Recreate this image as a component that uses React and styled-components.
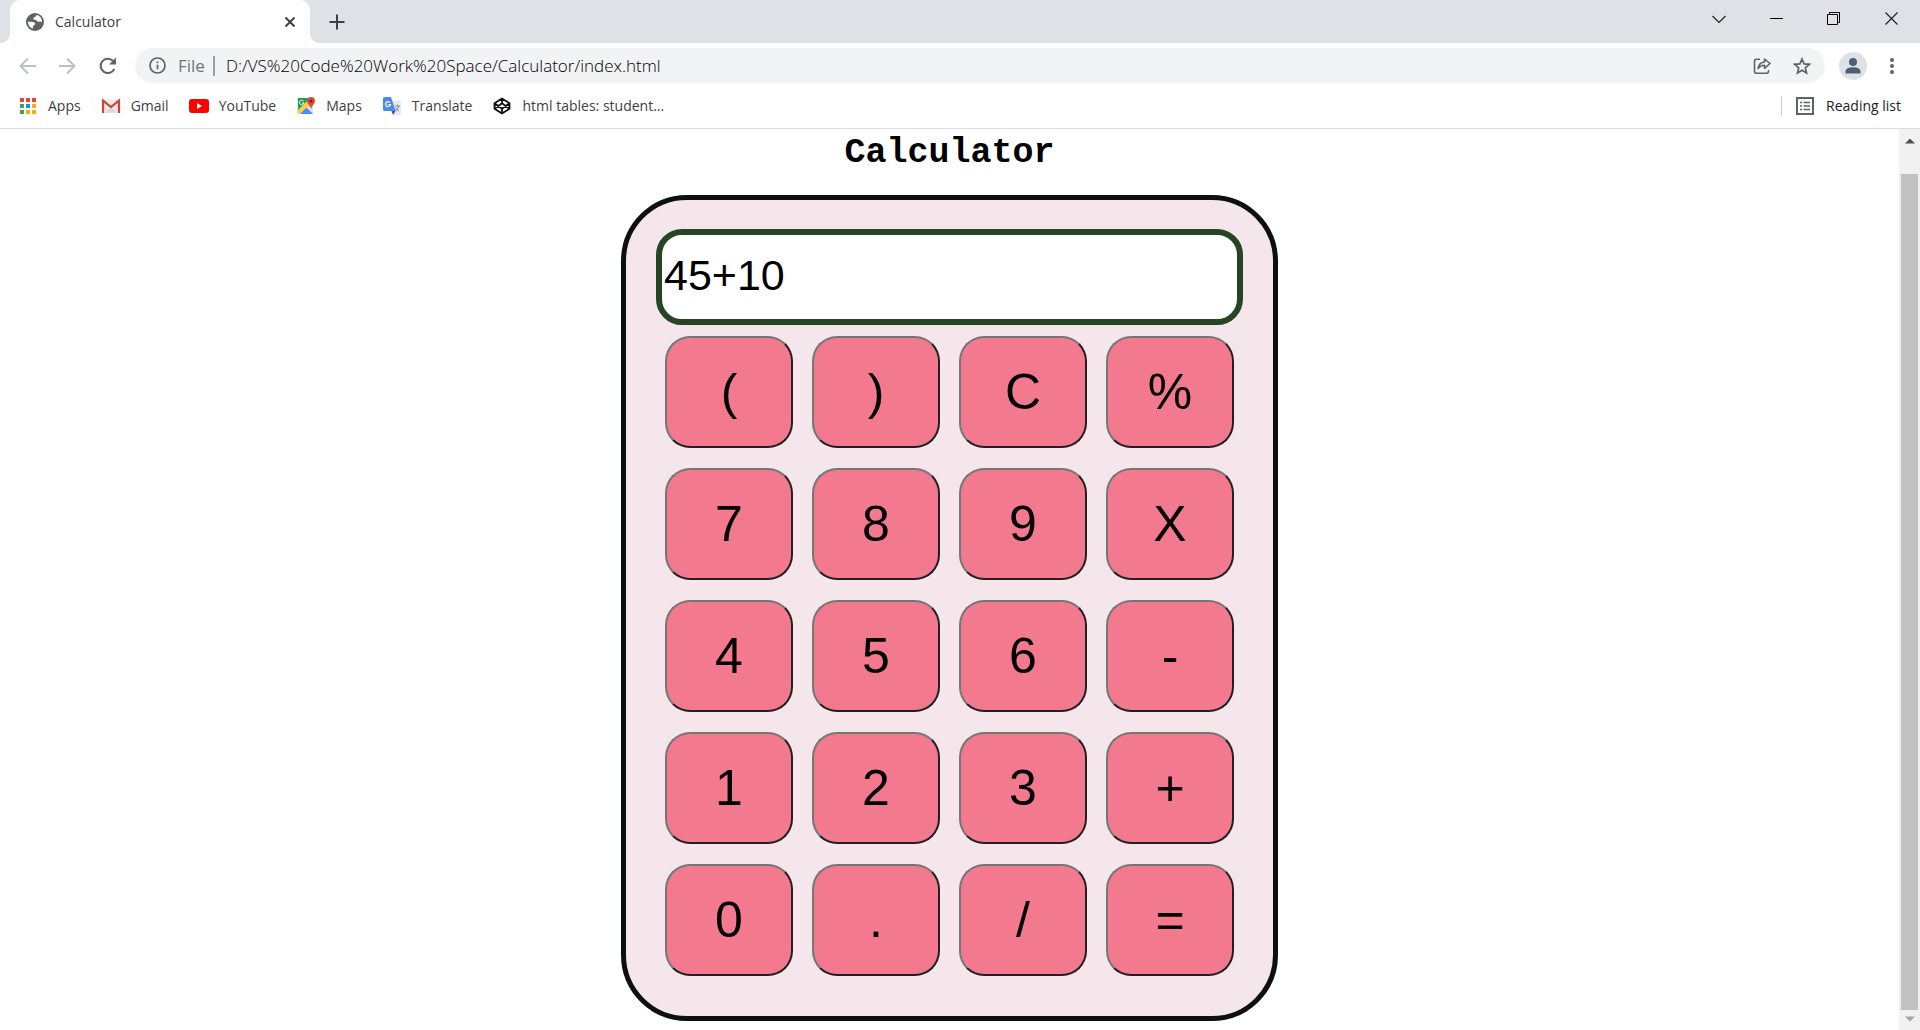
import React, { useState } from "react";
import styled, { createGlobalStyle } from "styled-components";

const GlobalStyle = createGlobalStyle`
  * { box-sizing: border-box; }
  body { margin: 0; background: #fff; }
  button { margin: 0; cursor: pointer; }
`;

const uiFont = `"Segoe UI", "Open Sans", "Noto Sans", sans-serif`;

const Window = styled.div`
  display: flex;
  flex-direction: column;
  height: 100vh;
  overflow: hidden;
  font-family: ${uiFont};
  color: #3c4043;
`;

const TabStrip = styled.header`
  display: flex;
  align-items: flex-end;
  height: 43px;
  padding-left: 10px;
  background: #dee1e6;
`;

const Tab = styled.div`
  position: relative;
  display: flex;
  align-items: center;
  gap: 11px;
  width: 300px;
  height: 43px;
  padding: 0 12px 0 16px;
  border-radius: 10px 10px 0 0;
  background: #fff;

  &::before,
  &::after {
    content: "";
    position: absolute;
    bottom: 0;
    width: 10px;
    height: 10px;
  }
  &::before {
    right: 100%;
    background: radial-gradient(circle at 0 0, transparent 10px, #fff 10px);
  }
  &::after {
    left: 100%;
    background: radial-gradient(circle at 100% 0, transparent 10px, #fff 10px);
  }
`;

const TabTitle = styled.span`
  flex: 1;
  font-size: 14px;
  line-height: 20px;
`;

const IconButton = styled.button`
  display: flex;
  align-items: center;
  justify-content: center;
  width: ${(p) => p.$width || 40}px;
  height: ${(p) => p.$height || 35}px;
  padding: 0;
  border: 0;
  border-radius: 50%;
  background: none;
  color: ${(p) => p.$color || "#5f6368"};
`;

const WindowControls = styled.div`
  display: flex;
  align-self: flex-start;
  margin-left: auto;
`;

const Toolbar = styled.nav`
  display: flex;
  align-items: center;
  height: 45px;
  padding: 0 10px 0 8px;
`;

const Omnibox = styled.form`
  display: flex;
  flex: 1;
  align-items: center;
  height: 35px;
  margin: 0 7px;
  padding: 0 3px 0 14px;
  border-radius: 18px;
  background: #f1f3f4;
  color: #5f6368;
`;

const Scheme = styled.label`
  margin-left: 12px;
  padding-right: 8px;
  border-right: 2px solid #9aa0a6;
  font-size: 17px;
  line-height: 20px;
  color: #70757a;
`;

const Address = styled.input`
  flex: 1;
  min-width: 0;
  height: 26px;
  padding: 0 0 0 11px;
  border: 0;
  outline: 0;
  background: none;
  font-family: ${uiFont};
  font-size: 17px;
  font-weight: 300;
  color: #000;
`;

const BookmarksBar = styled.nav`
  display: flex;
  align-items: center;
  gap: 20px;
  height: 41px;
  padding: 0 18px 4px;
  border-bottom: 1px solid #dadce0;
`;

const Bookmark = styled.a`
  display: flex;
  align-items: center;
  gap: 10px;
  font-size: 14px;
  line-height: 20px;
  color: #3c4043;
  text-decoration: none;
  white-space: nowrap;
`;

const ReadingList = styled.button`
  display: flex;
  align-items: center;
  gap: 12px;
  height: 20px;
  margin-left: auto;
  padding: 0 1px 0 14px;
  border: 0;
  border-left: 1px solid #c8cbd0;
  background: none;
  font-family: ${uiFont};
  font-size: 14px;
  line-height: 20px;
  color: #202124;

  svg { color: #5f6368; }
`;

const Viewport = styled.div`
  display: flex;
  flex: 1;
  min-height: 0;
`;

const Page = styled.main`
  display: flex;
  flex: 1;
  flex-direction: column;
  align-items: center;
  overflow: hidden;
  background: #fff;
`;

const Title = styled.h1`
  margin: 4px 0 22px;
  font-family: "Courier New", "Liberation Mono", monospace;
  font-size: 35px;
  line-height: 40px;
  color: #000;
`;

const CalculatorBody = styled.section`
  display: flex;
  flex-direction: column;
  gap: 11px;
  padding: 29px 30px 40px;
  border: 5px solid #0c110f;
  border-radius: 66px;
  background: #f4e6eb;
`;

const Display = styled.input`
  width: 100%;
  height: 96px;
  padding: 0 2px 4px;
  border: 6px solid #254525;
  border-radius: 26px;
  outline: 0;
  background: #fff;
  font-family: Arial, "Liberation Sans", sans-serif;
  font-size: 43px;
  color: #000;
`;

const Keypad = styled.div`
  display: grid;
  grid-template-columns: repeat(4, 128px);
  gap: 20px 19px;
  padding: 0 9px;
`;

const Key = styled.button`
  height: 112px;
  padding: 0;
  border: 2px solid;
  border-color: #767676 #212121 #212121 #767676;
  border-radius: 25px;
  background: #f3798f;
  font-family: Arial, "Liberation Sans", sans-serif;
  font-size: 50px;
  color: #000;
`;

const Scrollbar = styled.div`
  display: flex;
  flex-direction: column;
  width: 21px;
  padding: 0 2px;
  background: #f1f1f1;
`;

const ScrollArrow = styled.button`
  display: flex;
  align-items: center;
  justify-content: center;
  height: 20px;
  padding: ${(p) => (p.$up ? "4px 0 0" : "0 0 2px")};
  border: 0;
  background: none;
  color: ${(p) => (p.$up ? "#505050" : "#a3a3a3")};
`;

const Thumb = styled.div`
  flex: 1;
  margin-top: 25px;
  background: #c1c1c1;
`;

const Icon = ({ size = 20, box = "0 0 20 20", children, ...rest }) => (
  <svg width={size} height={size} viewBox={box} fill="none" stroke="currentColor" strokeWidth="2" aria-hidden="true" {...rest}>
    {children}
  </svg>
);

const GlobeIcon = () => (
  <Icon size={18} box="0 0 18 18" stroke="none" color="#5f6368">
    <circle cx="9" cy="9" r="9" fill="currentColor" />
    <path d="M10.5 1.8C10.7 3.6 9.4 3.7 8.3 4.2 7 4.8 7.2 6 7.8 6.4 9 7.2 9.7 6.4 10.4 7.3 11 8.3 11.4 8.8 13 8.6 14.4 8.4 15.2 9 16.1 9 16 5.2 13.8 2.8 10.5 1.8zM1.9 8.8C3.8 8.7 7 8.5 8.5 9.6 9.7 10.6 9.2 12 8 12.3 6.7 12.7 7 14.3 6.6 15.7 3.8 14.6 2 12.2 1.9 8.8z" fill="#fff" />
  </Icon>
);

const AppsIcon = () => (
  <Icon stroke="none">
    {["#ea4335", "#ea4335", "#ea4335", "#34a853", "#1a8cf0", "#fbab0a", "#34a853", "#fbab0a", "#fbab0a"].map((c, i) => (
      <rect key={i} x={2 + (i % 3) * 6} y={2 + Math.floor(i / 3) * 6} width="4" height="4" fill={c} />
    ))}
  </Icon>
);

const GmailIcon = () => (
  <Icon stroke="none">
    <path d="M1 4h18v13H1z" fill="#ebebeb" />
    <path d="M4 16.5 10 11l6 5.5z" fill="#d8d8d8" />
    <path d="M2 17V4.5L10 11l8-6.5V17" fill="none" stroke="#d93f35" strokeWidth="2.2" />
  </Icon>
);

const YouTubeIcon = () => (
  <Icon stroke="none">
    <rect x="0" y="3" width="20" height="14" rx="3" fill="#f00" />
    <path d="M8 7v6l5-3z" fill="#fff" />
  </Icon>
);

const MapsIcon = () => (
  <Icon stroke="none">
    <rect x="1" y="2" width="16" height="16" rx="1.5" fill="#e3e5e8" />
    <path d="M2.5 2H13v5L2 17V2z" fill="#1f9d57" />
    <path d="M1 15 13 3l3 4L4 18H2.5z" fill="#fdd044" />
    <path d="M4 18 10.5 11.5 17 18z" fill="#4b8df8" />
    <path d="M7.5 5.2A2.2 2.2 0 1 0 7.8 7H6" stroke="#fff" strokeWidth="1" fill="none" />
    <path d="M15 1a4 4 0 0 0-4 4c0 3.200 3.300 4 4 8.500.7-4.500 4-5.300 4-8.500a4 4 0 0 0-4-4z" fill="#dd4b3e" />
    <circle cx="15" cy="5" r="1.5" fill="#7b231e" />
  </Icon>
);

const TranslateIcon = () => (
  <Icon stroke="none">
    <path d="M8 5h9.500q1.500 0 1.500 1.500v11q0 1.500-1.500 1.500H11z" fill="#e6e8ea" />
    <path d="M13 10h5M15.500 8.500V10M17 10q-.5 3-4 5M13.500 11.500q1 2.500 3.500 3.500" stroke="#7b8a91" strokeWidth="1" />
    <path d="M2.500 1H9l4.500 14h-11Q1 15 1 13.500v-11Q1 1 2.500 1z" fill="#4a87ee" />
    <path d="M9.500 15h4L11 19z" fill="#2658c7" />
    <path d="M8 6.500A2.500 2.500 0 1 0 8.500 8.500H6.200" stroke="#fff" strokeWidth="1.2" fill="none" />
  </Icon>
);

const CodePenIcon = () => (
  <Icon color="#111" strokeWidth="1.8" strokeLinejoin="round">
    <path d="M10 2.500 17.500 7.300v5.400L10 17.500 2.500 12.700V7.300zM10 2.500v4.800M10 12.700v4.800M2.500 7.300 10 12.700l7.500-5.400M2.500 12.700 10 7.300l7.500 5.400" />
  </Icon>
);

const bookmarks = [
  ["Apps", AppsIcon],
  ["Gmail", GmailIcon],
  ["YouTube", YouTubeIcon],
  ["Maps", MapsIcon],
  ["Translate", TranslateIcon],
  ["html tables: student...", CodePenIcon],
];

const keys = ["(", ")", "C", "%", "7", "8", "9", "X", "4", "5", "6", "-", "1", "2", "3", "+", "0", ".", "/", "="];

function evaluate(expression) {
  try {
    return String(Function(`return (${expression.replace(/X/g, "*")})`)());
  } catch {
    return "Error";
  }
}

export default function App() {
  const [value, setValue] = useState("45+10");
  const [address, setAddress] = useState("D:/VS%20Code%20Work%20Space/Calculator/index.html");

  const press = (key) => {
    if (key === "C") setValue("");
    else if (key === "=") setValue(evaluate(value));
    else setValue(value + key);
  };

  return (
    <Window>
      <GlobalStyle />
      <TabStrip>
        <Tab>
          <GlobeIcon />
          <TabTitle>Calculator</TabTitle>
          <IconButton $width={16} $height={16} $color="#3c4043" aria-label="Close tab">
            <Icon size={12} box="0 0 12 12"><path d="M1.500 1.500l9 9M10.500 1.500l-9 9" /></Icon>
          </IconButton>
        </Tab>
        <IconButton $width={54} $height={43} $color="#3c4043" aria-label="New tab">
          <Icon size={16} box="0 0 16 16"><path d="M8 .5v15M.5 8h15" /></Icon>
        </IconButton>
        <WindowControls>
          <IconButton $width={58} $height={37} $color="#222" aria-label="Search tabs">
            <Icon size={14} box="0 0 14 14" strokeWidth="1.2"><path d="M.5 4 7 10.500 13.500 4" /></Icon>
          </IconButton>
          <IconButton $width={57} $height={37} $color="#000" aria-label="Minimize">
            <Icon size={13} box="0 0 13 13" strokeWidth="1"><path d="M0 6.500h13" /></Icon>
          </IconButton>
          <IconButton $width={57} $height={37} $color="#000" aria-label="Restore">
            <Icon size={13} box="0 0 13 13" strokeWidth="1"><path d="M.5 2.500h10v10H.5zM2.500 2.500v-2h10v10h-2" /></Icon>
          </IconButton>
          <IconButton $width={58} $height={37} $color="#222" aria-label="Close window">
            <Icon size={13} box="0 0 13 13" strokeWidth="1.2"><path d="M.5.5l12 12M12.500.5l-12 12" /></Icon>
          </IconButton>
        </WindowControls>
      </TabStrip>

      <Toolbar>
        <IconButton $color="#bdc1c6" aria-label="Back">
          <Icon><path d="M18 10H3M10 2.500 2.500 10l7.500 7.500" /></Icon>
        </IconButton>
        <IconButton $color="#bdc1c6" aria-label="Forward">
          <Icon><path d="M1 10h15M9 2.500l7.500 7.500-7.500 7.500" /></Icon>
        </IconButton>
        <IconButton aria-label="Reload">
          <Icon><path d="M16.300 13A7.200 7.200 0 1 1 15 4.900L16.500 6.500" /><path d="M18 1.500V8.500H11z" fill="currentColor" stroke="none" /></Icon>
        </IconButton>
        <Omnibox onSubmit={(e) => e.preventDefault()}>
          <Icon size={17}><circle cx="10" cy="10" r="8.8" /><path d="M10 9v5.500M10 5.200v2.200" /></Icon>
          <Scheme htmlFor="address">File</Scheme>
          <Address id="address" value={address} onChange={(e) => setAddress(e.target.value)} spellCheck={false} />
          <IconButton type="button" aria-label="Share">
            <Icon size={18} box="0 0 18 18" strokeWidth="1.6" strokeLinejoin="round">
              <path d="M7 2.200H3.500Q1.500 2.200 1.500 4.200v10q0 2 2 2h10q2 0 2-2V13" />
              <path d="M11.500 2v3Q6 5.500 5 11.500q2.500-3.200 6.500-3.200v3L17 6.500z" />
            </Icon>
          </IconButton>
          <IconButton type="button" aria-label="Bookmark this page">
            <Icon size={18} box="0 0 18 18" strokeWidth="1.7"><path d="M9 2l2.100 4.900 5.200.4-4 3.500 1.200 5.200L9 13.200 4.500 16l1.200-5.200-4-3.500 5.200-.4z" /></Icon>
          </IconButton>
        </Omnibox>
        <IconButton $width={42} aria-label="Profile">
          <Icon size={28} box="0 0 28 28" stroke="none">
            <circle cx="14" cy="14" r="14" fill="#dee1e6" />
            <circle cx="14" cy="10" r="4" fill="#4f5d73" />
            <path d="M6.500 21.500v-2c0-3 4-4.300 7.500-4.300s7.500 1.300 7.500 4.300v2z" fill="#4f5d73" />
          </Icon>
        </IconButton>
        <IconButton $width={36} aria-label="Menu">
          <Icon stroke="none" fill="currentColor"><circle cx="10" cy="4" r="2" /><circle cx="10" cy="10" r="2" /><circle cx="10" cy="16" r="2" /></Icon>
        </IconButton>
      </Toolbar>

      <BookmarksBar>
        {bookmarks.map(([label, Glyph]) => (
          <Bookmark key={label} href="#"><Glyph />{label}</Bookmark>
        ))}
        <ReadingList>
          <Icon size={18} box="0 0 18 18"><path d="M1 1h16v16H1z" /><path d="M4 5.500h2M7.500 5.500H14M4 9h2M7.500 9H14M4 12.500h2M7.500 12.500H14" strokeWidth="1.6" /></Icon>
          Reading list
        </ReadingList>
      </BookmarksBar>

      <Viewport>
        <Page>
          <Title>Calculator</Title>
          <CalculatorBody>
            <Display size={10} aria-label="Expression" value={value} onChange={(e) => setValue(e.target.value)} />
            <Keypad>
              {keys.map((key) => (
                <Key key={key} onClick={() => press(key)}>{key}</Key>
              ))}
            </Keypad>
          </CalculatorBody>
        </Page>
        <Scrollbar>
          <ScrollArrow $up aria-label="Scroll up">
            <Icon size={10} box="0 0 10 10" stroke="none" fill="currentColor"><path d="M5 2.500l5 5H0z" /></Icon>
          </ScrollArrow>
          <Thumb />
          <ScrollArrow aria-label="Scroll down">
            <Icon size={10} box="0 0 10 10" stroke="none" fill="currentColor"><path d="M5 7.500l5-5H0z" /></Icon>
          </ScrollArrow>
        </Scrollbar>
      </Viewport>
    </Window>
  );
}
